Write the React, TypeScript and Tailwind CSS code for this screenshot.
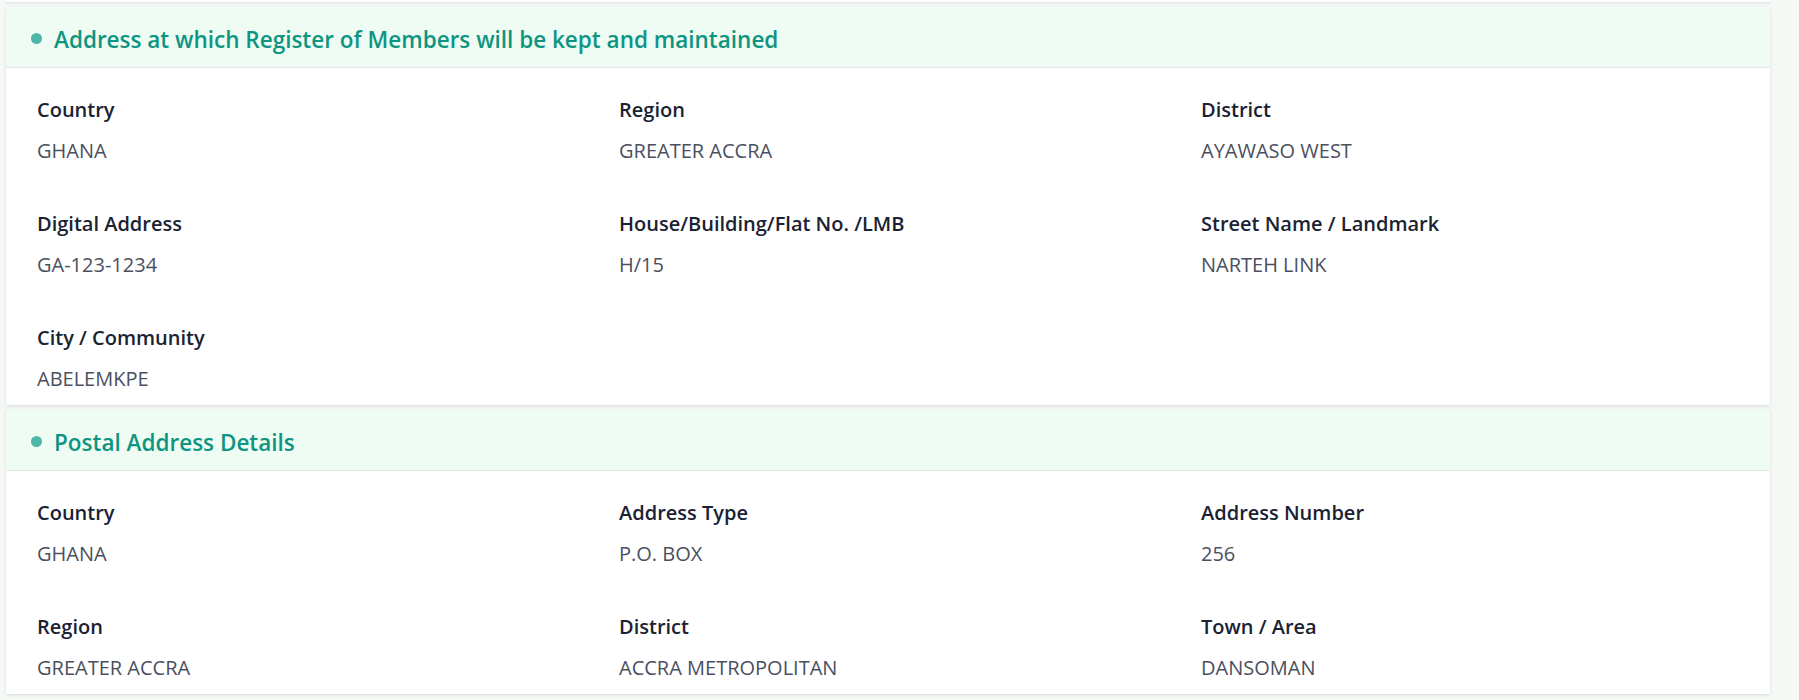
import React from "react";

type Field = { label: string; value: string };

const font = { fontFamily: '"Open Sans", "Noto Sans", sans-serif' };

function Section({ title, fields }: { title: string; fields: Field[] }) {
  return (
    <div className="w-[1764px] bg-white shadow-[0_1px_3px_rgba(0,0,0,0.12)]">
      <div className="flex h-[61px] items-center border-b border-[#e3e8e6] bg-[#effcf3] pl-[25px]">
        <span className="mr-[12px] mt-[2px] h-[11px] w-[11px] shrink-0 rounded-full bg-[#4db6a6]" />
        <h2 className="pt-[5px] text-[22.5px] font-semibold text-[#0e9582]">{title}</h2>
      </div>
      <div className="grid grid-cols-[582px_582px_1fr] gap-y-[50px] pb-[15px] pl-[31px] pt-[30px]">
        {fields.map((f) => (
          <div key={f.label} className="flex flex-col gap-[16px]">
            <div className="h-[24px] text-[20px] font-semibold leading-[24px] text-[#1a2233]">{f.label}</div>
            <div className="h-[24px] pt-[1px] text-[20px] leading-[24px] text-[#4a5060]">{f.value}</div>
          </div>
        ))}
      </div>
    </div>
  );
}

export default function App() {
  const s1: Field[] = [
    { label: "Country", value: "GHANA" },
    { label: "Region", value: "GREATER ACCRA" },
    { label: "District", value: "AYAWASO WEST" },
    { label: "Digital Address", value: "GA-123-1234" },
    { label: "House/Building/Flat No. /LMB", value: "H/15" },
    { label: "Street Name / Landmark", value: "NARTEH LINK" },
    { label: "City / Community", value: "ABELEMKPE" },
  ];
  const s2: Field[] = [
    { label: "Country", value: "GHANA" },
    { label: "Address Type", value: "P.O. BOX" },
    { label: "Address Number", value: "256" },
    { label: "Region", value: "GREATER ACCRA" },
    { label: "District", value: "ACCRA METROPOLITAN" },
    { label: "Town / Area", value: "DANSOMAN" },
  ];
  return (
    <div className="h-[700px] overflow-hidden bg-[#f5f9f6] pl-[6px]" style={font}>
      <div className="h-[2px] w-[1764px] bg-white shadow-[0_1px_3px_rgba(0,0,0,0.12)]" />
      <div className="mt-[5px] flex flex-col gap-[5px]">
        <Section title="Address at which Register of Members will be kept and maintained" fields={s1} />
        <Section title="Postal Address Details" fields={s2} />
      </div>
    </div>
  );
}
